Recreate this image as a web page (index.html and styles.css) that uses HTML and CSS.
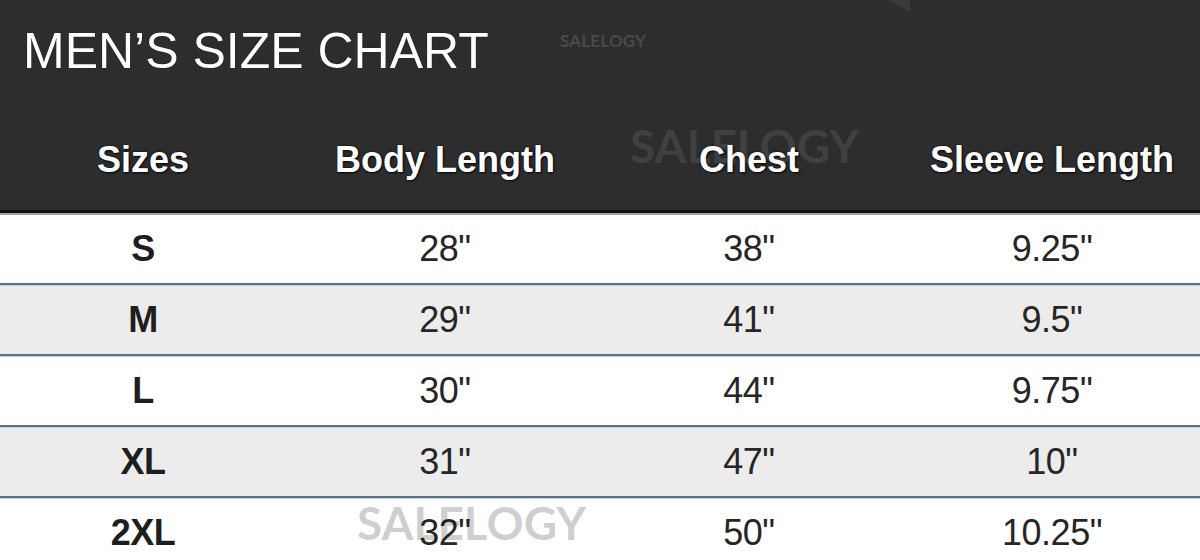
FILE: index.html
```html
<!DOCTYPE html>
<html lang="en">
<head>
<meta charset="utf-8">
<title>Men's Size Chart</title>
<link rel="stylesheet" href="styles.css">
</head>
<body>
<div class="chart">
  <header class="chart-head">
    <h1 class="title">MEN’S SIZE CHART</h1>
    <div class="grid labels">
      <div class="cell">Sizes</div>
      <div class="cell">Body Length</div>
      <div class="cell">Chest</div>
      <div class="cell last">Sleeve Length</div>
    </div>
    <span class="wm wm-small">SALELOGY</span>
    <span class="wm wm-head">SALELOGY</span>
    <svg class="corner" width="30" height="14" viewBox="0 0 30 14"><path d="M0 0 L22 0 L22 12 Z" fill="#3a3a3a"/></svg>
  </header>
  <div class="rows">
    <div class="grid row">
      <div class="cell size">S</div><div class="cell">28"</div><div class="cell">38"</div><div class="cell last">9.25"</div>
    </div>
    <div class="grid row alt">
      <div class="cell size">M</div><div class="cell">29"</div><div class="cell">41"</div><div class="cell last">9.5"</div>
    </div>
    <div class="grid row">
      <div class="cell size">L</div><div class="cell">30"</div><div class="cell">44"</div><div class="cell last">9.75"</div>
    </div>
    <div class="grid row alt">
      <div class="cell size">XL</div><div class="cell">31"</div><div class="cell">47"</div><div class="cell last">10"</div>
    </div>
    <div class="grid row end">
      <div class="cell size">2XL</div><div class="cell">32"</div><div class="cell">50"</div><div class="cell last">10.25"</div>
    </div>
    <span class="wm wm-foot">SALELOGY</span>
  </div>
</div>
</body>
</html>
```

FILE: styles.css
```css
html, body {
  margin: 0;
  padding: 0;
  background: #ffffff;
  overflow: hidden;
}

.chart {
  width: 1200px;
  height: 560px;
  font-family: "Liberation Sans", Arial, sans-serif;
  overflow: hidden;
}

.chart-head {
  position: relative;
  height: 213px;
  box-sizing: border-box;
  padding-top: 26px;
  background: #2d2d2d;
  border-bottom: 3px solid #121212;
  box-shadow: 0 2px 0 #a3a3a3;
  margin-bottom: 2px;
}

.title {
  margin: 0 0 0 23px;
  font-size: 50px;
  line-height: 50px;
  font-weight: 400;
  color: #ffffff;
  text-shadow: 0 0 1px #000;
}

.grid {
  display: grid;
  grid-template-columns: 286px 318px 290px 1fr;
}

.cell {
  text-align: center;
  white-space: nowrap;
}

.cell.last {
  padding-left: 10px;
}

.labels {
  margin-top: 66px;
  font-size: 36px;
  line-height: 36px;
  font-weight: 700;
  color: #ffffff;
  text-shadow: 0 0 2px #000, 1px 1px 2px #0a0a1a;
}

.rows {
  position: relative;
}

.row {
  height: 68px;
  line-height: 68px;
  font-size: 36px;
  color: #262626;
  background: #ffffff;
  border-bottom: 2px solid #5f7184;
  letter-spacing: -0.5px;
}

.row + .row {
  border-top: 1px solid #bcd3e3;
}

.row.alt {
  background: #ececec;
}

.row.end {
  border-bottom: 0;
}

.size {
  font-weight: 700;
  color: #1e1e1e;
}

.wm {
  position: absolute;
  font-family: Lato, "Open Sans", sans-serif;
  font-weight: 700;
  white-space: nowrap;
  pointer-events: none;
}

.wm-small {
  left: 560px;
  top: 30px;
  font-size: 17px;
  letter-spacing: 0.2px;
  color: #4a4a4a;
}

.wm-head {
  left: 630px;
  top: 118px;
  font-size: 46px;
  color: rgba(255, 255, 255, 0.1);
}

.wm-foot {
  left: 357px;
  top: 280px;
  font-size: 46px;
  color: rgba(0, 0, 0, 0.2);
}

.corner {
  position: absolute;
  left: 888px;
  top: 0;
}
```
